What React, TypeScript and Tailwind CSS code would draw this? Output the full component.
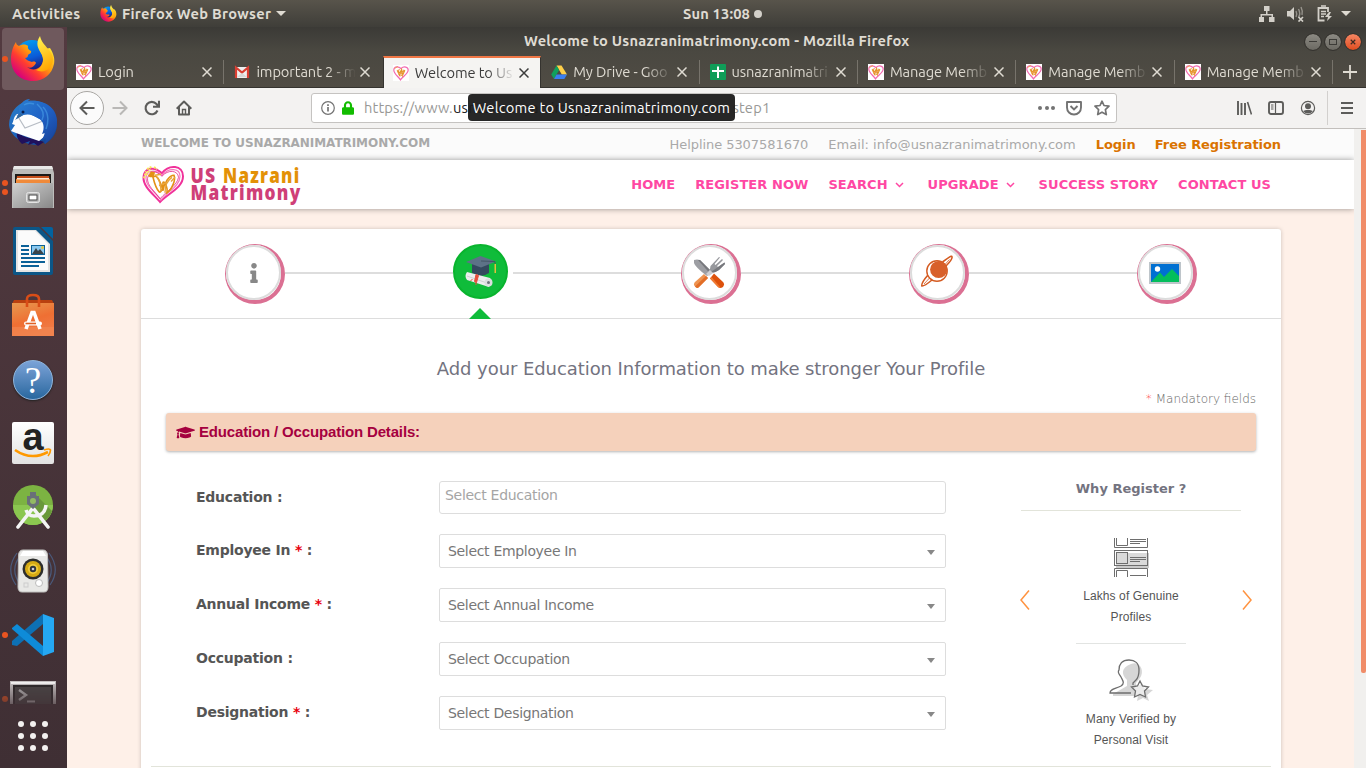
import React from "react";
import type { ReactNode } from "react";
import { FaGraduationCap, FaInfo, FaLock } from "react-icons/fa";

const uiFont = "font-['Ubuntu','Noto_Sans',sans-serif]";
const siteFont = "font-['DejaVu_Sans',sans-serif]";

/* ---------- brand marks ---------- */

function HeartMark({ className }: { className: string }) {
  return (
    <svg viewBox="0 0 42 38" className={className} fill="none" preserveAspectRatio="none">
      <path d="M18 36C11 28 1 21 1.500 12C2 4 11 0 20 8C27-1 41 0 41 11C41 22 27 27 18 36Z" stroke="#f0319a" strokeWidth="2" />
      <path d="M19 34C12 25 4 21 4 13C4 6 12 3 20 10C27 2 38 3 38 11C38 21 25 26 19 34Z" stroke="#f778bd" strokeWidth="1.200" />
      <path d="M18 33C13 26 5 20 5.500 13C7 6 13 4 20 11C26 4 36 5 36.500 12C35 20 26 24 18 33Z" stroke="#e52d8c" strokeWidth=".8" />
      <path d="M11 12C14 9 17 12 21 25C22 18 27 10 32 10C34 14 30 24 25 27C26 23 23 15 21 17C21 22 19 28 17 26C14 23 12 16 11 12Z" stroke="#e39115" strokeWidth="1.600" />
      <path d="M14 11C17 14 19 19 19 26M30 12C25 15 23 21 23 27M13 10L19 9M29 16L33 12M17 20L25 17" stroke="#e9a53a" strokeWidth="1.400" />
      <path d="M6 11L9 6L13 7L12 12L8 12Z" fill="#e39115" />
      <path d="M2 13L4 6M5 4L10 1.500M12 2L15 4M4 10L8 4" stroke="#f9e65a" strokeWidth="2" strokeDasharray="2 1" />
    </svg>
  );
}

function FavHeart() {
  return (
    <span className="flex size-4 shrink-0 items-center justify-center bg-white">
      <svg viewBox="0 0 16 16" className="size-4" fill="none">
        <path d="M7.500 14.800C5 11 .8 9 .8 5C1 1.500 5 .8 8 3.500C11 .8 15.200 2 15.200 5C15 9 10 11 7.500 14.800Z" stroke="#f368b0" strokeWidth="1.200" />
        <path d="M4.500 5L6.500 9.500L8.500 5.500L9.500 9.500L11.500 5" stroke="#e3952b" strokeWidth="1.900" />
        <path d="M5 9L11 7M4 6L7 4.500M1.500 3.500L5 1.500M7 11L10 10" stroke="#f0a254" strokeWidth="1" />
      </svg>
    </span>
  );
}

function FirefoxIcon({ className }: { className: string }) {
  return (
    <svg viewBox="0 0 46 46" className={className}>
      <defs>
        <linearGradient id="ffBody" x1="0.850" y1="0.150" x2="0.150" y2="0.850">
          <stop offset="0" stopColor="#ffe02e" />
          <stop offset=".38" stopColor="#ff9a0d" />
          <stop offset=".65" stopColor="#ff3d30" />
          <stop offset="1" stopColor="#d6007c" />
        </linearGradient>
        <linearGradient id="ffGlobe" x1="0" y1="0" x2="0.300" y2="1">
          <stop offset="0" stopColor="#00a8f5" />
          <stop offset=".6" stopColor="#0a5bd8" />
          <stop offset="1" stopColor="#22136b" />
        </linearGradient>
        <linearGradient id="ffTail" x1="0.300" y1="0" x2="0.600" y2="1">
          <stop offset="0" stopColor="#fff14f" />
          <stop offset="1" stopColor="#ffa400" />
        </linearGradient>
      </defs>
      <circle cx="22" cy="21" r="17" fill="url(#ffGlobe)" />
      <path d="M6 6C6 8 7 9 9 10C12 8 16 8 18 10C18 11 17 13 21 15C22 17 19 18 18 19C18 21 17 22 15 22C16 24 19 25 22 26C24 25 26 26 26 27C24 31 20 33 17 31C23 36 32 33 33 24C33 19 30 15 29 10C33 12 37 13 40 12C44 18 45 24 44 28C42 38 34 45 23 45C10 45 1 36 1 23C1 17 3 10 6 6Z" fill="url(#ffBody)" />
      <path d="M30 0C25 8 28 12 32 19C35 25 32 32 26 34C34 38 42 33 43 24C44 15 32 10 30 0Z" fill="url(#ffTail)" />
    </svg>
  );
}

/* ---------- dock ---------- */

function DockItem({ children, dots = 0, active = false }: { children: ReactNode; dots?: number; active?: boolean }) {
  return (
    <div className="relative flex h-16 w-[67px] shrink-0 items-center justify-center pr-px">
      {active && <span className="absolute top-px left-[2px] h-[62px] w-[62px] rounded-[4px] bg-[#6f595d]" />}
      {dots > 0 && (
        <span className="absolute inset-y-0 left-[2px] flex flex-col justify-center gap-[3px]">
          {Array.from({ length: dots }).map((_, i) => (
            <span key={i} className="size-[6px] rounded-full bg-[#e95420]" />
          ))}
        </span>
      )}
      <span className="relative flex">{children}</span>
    </div>
  );
}

function Dock() {
  return (
    <aside className="flex h-[741px] w-[67px] shrink-0 flex-col overflow-hidden bg-linear-to-b from-[#533a40] to-[#3f2f34]">
      <div className="flex h-[677px] flex-col overflow-hidden">
        <DockItem active dots={1}><FirefoxIcon className="size-[46px]" /></DockItem>

        <DockItem>
          <svg viewBox="0 0 50 50" className="size-[50px]">
            <defs>
              <linearGradient id="tb" x1="0" y1="0" x2="1" y2="1"><stop offset="0" stopColor="#2b7fc9" /><stop offset=".5" stopColor="#1c63bd" /><stop offset="1" stopColor="#0e3b86" /></linearGradient>
              <linearGradient id="tbWing" x1="0" y1="0" x2="1" y2="1"><stop offset="0" stopColor="#2a7fd0" /><stop offset=".5" stopColor="#2062c6" /><stop offset="1" stopColor="#173f95" /></linearGradient>
            </defs>
            <path d="M20 3C34 1 48 9 49 24C50 34 44 42 37 46L34 43L28 47C14 46 2 38 1 27C1 15 9 6 17 4Z" fill="url(#tb)" />
            <path d="M9 34C14 39 22 40 30 42L36 44L30 48L26 45L20 47L22 43L14 46C10 42 8 38 9 34Z" fill="#20115c" />
            <path d="M9 16C5 19 6 23 4 26L7 27L3 33L8 35L31 43L37 38L36 31L39 25L20 15Z" fill="#fdfdfe" />
            <path d="M9 17L17 30L35 23" fill="none" stroke="#b7bcc4" strokeWidth="1.200" />
            <path d="M11 14C10 7 16 1 22 1L20 3C34 1 48 8 49 22C49 34 44 40 37 46L38 40L34 42L37 35L34 36C37 30 36 23 30 20C24 16 17 15 12 19L8 21Z" fill="url(#tbWing)" />
            <path d="M12 15L7 22L15 17Z" fill="#34679a" /><circle cx="15" cy="14" r="1.500" fill="#0a1d4a" />
            <path d="M29 6C36 12 36 18 34 22M35 9C42 16 40 26 38 31M16 7Q20 4 26 6" stroke="#4aa0e8" fill="none" strokeWidth="1.500" opacity=".6" />
          </svg>
        </DockItem>

        <DockItem dots={2}>
          <svg viewBox="0 0 42 44" className="h-[44px] w-[42px]">
            <defs>
              <linearGradient id="cab" x1="0" y1="0" x2="1" y2="1"><stop offset="0" stopColor="#d0d0d0" /><stop offset="1" stopColor="#888" /></linearGradient>
            </defs>
            <path d="M2 1H40L42 8V43H0V8Z" fill="#bdbdbb" />
            <path d="M2 1H40L41 4H1Z" fill="#e9e9e8" />
            <path d="M3 9H39V18H3Z" fill="#1d1b19" />
            <path d="M5 11H37L38 18H4Z" fill="#c7501c" /><path d="M4 14H38V18H4Z" fill="#f08a3a" /><path d="M5 13H37V14.500H5Z" fill="#ffe8d0" />
            <path d="M1 18H41V42Q41 43 40 43H2Q1 43 1 42Z" fill="url(#cab)" />
            <rect x="14.500" y="27.500" width="13" height="10" rx="2" fill="#bdbdbd" stroke="#e4e4e4" />
            <rect x="17" y="30" width="8" height="5" fill="#fff" stroke="#444" />
          </svg>
        </DockItem>

        <DockItem>
          <svg viewBox="0 0 40 48" className="h-[48px] w-[40px]">
            <path d="M2 0H26L40 14V46Q40 48 38 48H2Q0 48 0 46V2Q0 0 2 0Z" fill="#0b5687" />
            <path d="M28 0H38Q40 0 40 2V12Z" fill="#0263a0" />
            <path d="M3 3H23L37 17V45H3Z" fill="#e4e4e4" /><path d="M5 4H22L35 17V43H5Z" fill="#fbfbfb" />
            <path d="M8 19H16M8 23H16M8 27H16M8 31H32M8 35H32M8 39H26" stroke="#0b6198" strokeWidth="2" />
            <rect x="18.500" y="18.500" width="13" height="9" fill="#8ac8ef" stroke="#0b6198" />
            <path d="M19 27L23 21L25 24L27 22L31 27Z" fill="#39444a" /><circle cx="29.500" cy="20.500" r="1.500" fill="#e8c840" />
          </svg>
        </DockItem>

        <DockItem>
          <svg viewBox="0 0 42 44" className="h-[44px] w-[42px]">
            <defs><linearGradient id="bag" x1="0" y1="0" x2=".4" y2="1"><stop offset="0" stopColor="#e7994f" /><stop offset=".6" stopColor="#ef6f33" /><stop offset="1" stopColor="#f07a45" /></linearGradient></defs>
            <path d="M2 7H40L42 11H0Z" fill="#b9400f" />
            <path d="M0 10H42V43H0Z" fill="url(#bag)" />
            <path d="M15 14V6Q15 2 21 2Q27 2 27 6V14" fill="none" stroke="#d94d17" strokeWidth="2.600" />
            <path d="M0 34H42V43H0Z" fill="#f38a55" opacity=".55" />
            <path d="M14 36L20 19.500H22L28 36" fill="none" stroke="#fff" strokeWidth="3.600" />
            <rect x="12" y="28.500" width="18" height="4" rx="2" fill="#fff" /><path d="M13.500 30.500H24" stroke="#e06024" strokeWidth="1.600" />
          </svg>
        </DockItem>

        <DockItem>
          <span className="mt-0.5 flex size-10 items-center justify-center rounded-full border border-[#8fb6de] bg-linear-to-b from-[#7ba3d8] to-[#28689f] shadow-[0_1px_2px_#222] font-['Liberation_Serif',serif] text-[37px] leading-none text-white">?</span>
        </DockItem>

        <DockItem>
          <span className="relative flex size-[42px] justify-center rounded-[2px] bg-linear-to-b from-white to-[#e2e2e2] font-['Liberation_Sans',sans-serif] text-[38px] leading-[31px] font-bold text-[#222]">
            a
            <svg viewBox="0 0 42 42" className="absolute inset-0 size-[42px]" fill="none">
              <path d="M3 28Q19 39 36 30" stroke="#f90" strokeWidth="2.600" /><path d="M32 28Q38 26 38.500 28Q38.500 31 36 34" stroke="#f90" strokeWidth="1.700" />
            </svg>
          </span>
        </DockItem>

        <DockItem>
          <svg viewBox="0 0 40 46" className="h-[46px] w-[40px]">
            <circle cx="20" cy="21" r="20" fill="#7cb342" /><path d="M0 21A20 20 0 0 0 40 21Z" fill="#8bc750" />
            <path d="M22 10L39 27A20 20 0 0 1 32 37L18 25Z" fill="#69983a" />
            <path d="M20 24L35 43M20 24L5 43" stroke="#f4f4f4" strokeWidth="3.600" strokeLinecap="round" />
            <path d="M13 26Q15 32 21 32Q32 32 33 21" stroke="#f4f4f4" strokeWidth="3.500" fill="none" />
            <path d="M17 8H23V12H26V20L20 25L14 20V12H17Z" fill="#697078" /><circle cx="20" cy="17" r="3" fill="#93ba63" />
          </svg>
        </DockItem>

        <DockItem>
          <svg viewBox="0 0 48 44" className="h-[44px] w-[48px]">
            <path d="M8 4Q-4 20 7 36M12 6Q0 20 11 35M40 4Q52 20 41 36M36 6Q48 20 37 35" fill="none" stroke="#4c6791" strokeWidth="1.200" opacity=".75" />
            <path d="M14 1H34Q38 1 38.500 6L39 38Q39 43 35 43H13Q9 43 9 38L9.500 6Q10 1 14 1Z" fill="#e8e8e6" stroke="#c2c2c0" />
            <path d="M14 2H34L37 7H11Z" fill="#fff" />
            <circle cx="24" cy="20" r="10.500" fill="#2d2e2d" /><circle cx="24" cy="20" r="8" fill="#d6aa14" /><circle cx="24" cy="20" r="5" fill="#f1cd3c" />
            <circle cx="24" cy="20" r="3.200" fill="#30343a" /><circle cx="24" cy="20" r="1.300" fill="#ccd" />
            <circle cx="30" cy="34" r="3.500" fill="#fff" stroke="#bbb" /><rect x="15" y="34" width="4" height="4" fill="none" stroke="#ccc" />
          </svg>
        </DockItem>

        <DockItem dots={1}>
          <svg viewBox="0 0 42 42" className="size-[42px]">
            <path d="M0 27V31L5 32L31 10V0Z" fill="#0d70b4" />
            <path d="M0 14L5 10L31 32V42L0 15Z" fill="#0e8bd8" />
            <path d="M31 0L42 4V38L31 42Z" fill="#25a8f3" />
          </svg>
        </DockItem>

        <div className="mask-b-from-20% mask-b-to-75%">
          <DockItem dots={1}>
            <svg viewBox="0 0 46 36" className="h-[36px] w-[46px]">
              <rect width="46" height="36" fill="#c9c5c5" /><rect x="1" y="1" width="44" height="2" fill="#fff" />
              <rect x="3" y="4" width="40" height="31" fill="#2b2829" /><rect x="5" y="6" width="36" height="28" fill="#4a4647" />
              <path d="M9 9L16 14L9 19" stroke="#bbb" strokeWidth="2.400" fill="none" /><path d="M17 20.500H25" stroke="#bbb" strokeWidth="2" />
            </svg>
          </DockItem>
        </div>
      </div>
      <div className="mt-[17px] ml-[18px] grid w-[30px] grid-cols-3 gap-[6px]">
        {Array.from({ length: 9 }).map((_, i) => (
          <span key={i} className="size-[6px] rounded-full bg-[#f3f1f0]" />
        ))}
      </div>
    </aside>
  );
}

/* ---------- desktop top bar ---------- */

function TopBar() {
  return (
    <header className={`${uiFont} grid h-[27px] shrink-0 grid-cols-[624px_1fr_auto] items-center bg-linear-to-b from-[#58544b] to-[#3f3e39] text-[14.67px] font-bold text-[#dfdbd2]`}>
      <div className="flex items-center pl-3">
        <span className="w-[88px] tracking-[0.33px]">Activities</span>
        <FirefoxIcon className="size-[17px]" />
        <span className="ml-[5px] tracking-[0.28px]">Firefox Web Browser</span>
        <span className="ml-[5px] h-0 w-0 border-x-5 border-t-5 border-x-transparent border-t-[#dfdbd2]" />
      </div>
      <div className="flex items-center pl-[59px]">
        <span className="tracking-[0.15px]">Sun 13:08</span>
        <span className="ml-1 size-2 rounded-full bg-[#d3d0c9]" />
      </div>
      <div className="flex items-center pr-[15px] text-[#d3d0c9]">
        <svg viewBox="0 0 16 16" className="size-4" fill="currentColor"><path d="M5 0H10.500V5H8.500V8H14V11H15.500V16H10V11H12.500V9.500H3V11H5V16H0V11H1.500V8H7V5H5Z" /></svg>
        <svg viewBox="0 0 17 16" className="ml-3 h-4 w-[17px]" fill="currentColor"><path d="M0 5H3L7 1V14L3 10.500H0Z" /><path d="M9 5Q10.500 8 9 11M11.500 3Q14 8 11.500 11M14 1Q16 5 15 9" fill="none" stroke="currentColor" opacity=".55" strokeWidth="1.400" /><path d="M11.500 11L16 15.500M16 11L11.500 15.500" stroke="currentColor" strokeWidth="1.700" /></svg>
        <svg viewBox="0 0 16 17" className="ml-[13px] h-[17px] w-4" fill="none" stroke="currentColor"><path d="M7.500 15.500H1.500V3H11V7" strokeWidth="1.800" /><path d="M4 1H9M4 6.500H9M4 9H9M4 11.500H7" strokeWidth="1.500" /><path d="M12 7L8 12H11L10 16L15 11H12L14 7Z" fill="currentColor" stroke="none" /></svg>
        <span className="ml-2 h-0 w-0 border-x-5 border-t-5 border-x-transparent border-t-[#dfdbd2]" />
      </div>
    </header>
  );
}

/* ---------- browser chrome ---------- */

function GmailIcon() {
  return (
    <svg viewBox="0 0 16 16" className="size-4 shrink-0"><path d="M1 3H15V14H1Z" fill="#eee" /><path d="M2 14V3.500L8 8.500L14 3.500V14" fill="none" stroke="#d93f33" strokeWidth="2.200" /><path d="M3 13L8 9L13 13Z" fill="#d8d8d8" /></svg>
  );
}
function DriveIcon() {
  return (
    <svg viewBox="0 0 16 16" className="size-4 shrink-0"><path d="M5.500 1.500H10.500L16 10.500H10.800Z" fill="#ffcf48" /><path d="M5.500 1.500L8.200 6L3 15L.2 10.500Z" fill="#11a05e" /><path d="M5.500 10.500H16L13.300 15H3Z" fill="#3c7ff0" /></svg>
  );
}
function SheetsIcon() {
  return (
    <svg viewBox="0 0 16 16" className="size-4 shrink-0"><rect width="16" height="16" rx="1" fill="#0f9d58" /><path d="M2 7H14M8 2.500V14" stroke="#fff" strokeWidth="2" /></svg>
  );
}

const tabs: { title: string; icon: ReactNode; active?: boolean; sep?: boolean }[] = [
  { title: "Login", icon: <FavHeart />, sep: true },
  { title: "important 2 - m", icon: <GmailIcon /> },
  { title: "Welcome to Us", icon: <FavHeart />, active: true },
  { title: "My Drive - Goo", icon: <DriveIcon />, sep: true },
  { title: "usnazranimatri", icon: <SheetsIcon />, sep: true },
  { title: "Manage Memb", icon: <FavHeart />, sep: true },
  { title: "Manage Memb", icon: <FavHeart />, sep: true },
  { title: "Manage Memb", icon: <FavHeart />, sep: true },
];

function Chrome() {
  return (
    <div className={`${uiFont} relative shrink-0`}>
      <div className="bg-linear-to-b from-[#3b3a36] via-[#4a4841] via-40% to-[#504c44]">
        <div className="relative flex h-[29px] items-center justify-end gap-1 pr-[5px] text-[14.67px] text-[#dfdbd2]">
          <span className="absolute top-[3px] left-[457px] whitespace-nowrap font-bold tracking-[0.26px]">Welcome to Usnazranimatrimony.com - Mozilla Firefox</span>
          <span className="flex size-4 items-center justify-center rounded-full bg-linear-to-b from-[#8c8a83] to-[#6c6a63] outline outline-[#35332f]"><span className="h-px w-2 bg-[#3c3b37]" /></span>
          <span className="flex size-4 items-center justify-center rounded-full bg-linear-to-b from-[#8c8a83] to-[#6c6a63] outline outline-[#35332f]"><span className="h-[6px] w-2 border border-[#3c3b37]" /></span>
          <span className="flex size-4 items-center justify-center rounded-full bg-linear-to-b from-[#f58662] to-[#e04c1c] outline outline-[#35332f]"><svg viewBox="0 0 8 8" className="size-[6px]"><path d="M1 1L7 7M7 1L1 7" stroke="#3c2a22" strokeWidth="1.600" /></svg></span>
        </div>
        <div className="flex h-8 border-b border-[#35332f]">
          {tabs.map((t, i) => (
            <div
              key={i}
              className={
                t.active
                  ? "relative -mb-px flex w-[158.4px] items-center border-x border-t-2 border-x-[#35332f] border-t-[#f07746] bg-[#f5f4f2] pl-[9px] text-[#3c3c3c]"
                  : `relative flex items-center text-[#dfdbd2] ${i === 0 ? "w-[157.4px] pl-[9px]" : "w-[158.4px] pl-[10px]"}`
              }
            >
              {t.icon}
              <span className="ml-[6px] w-[100px] mask-r-from-72% mask-r-to-100% text-[14.67px] leading-5 tracking-[-0.1px] whitespace-nowrap">{t.title}</span>
              <svg viewBox="0 0 10 10" className="ml-[4px] size-[10px] shrink-0" fill="none" stroke="currentColor" strokeWidth="1.500"><path d="M.5 .5L9.500 9.500M9.500 .5L.5 9.500" /></svg>
              {t.sep && <span className="absolute top-[4px] right-0 h-6 w-px bg-[#77736b]" />}
            </div>
          ))}
          <div className="flex flex-1 items-center justify-center text-[#dfdbd2]">
            <svg viewBox="0 0 14 14" className="size-[14px]" stroke="currentColor" strokeWidth="1.800"><path d="M7 0V14M0 7H14" /></svg>
          </div>
        </div>
      </div>

      <div className="flex h-[41px] items-center border-b border-[#c2bfbc] bg-[#f3f2f1] text-[#5c5c5a]">
        <span className="ml-[3px] flex size-[34px] items-center justify-center rounded-full border border-[#a9a7a4] bg-[#fbfbfb]">
          <svg viewBox="0 0 16 16" className="size-4" fill="none" stroke="currentColor" strokeWidth="2"><path d="M15.500 8H1.500M8 1.500L1.500 8L8 14.500" /></svg>
        </span>
        <svg viewBox="0 0 16 16" className="ml-2 size-4 text-[#b9b8b6]" fill="none" stroke="currentColor" strokeWidth="2"><path d="M.5 8H14.500M8 1.500L14.500 8L8 14.500" /></svg>
        <svg viewBox="0 0 16 16" className="ml-4 size-4" fill="none" stroke="currentColor" strokeWidth="2.100"><path d="M13.500 10.500A6.200 6.200 0 1 1 12.500 4L14 6" /><path d="M15 .8V6.800H9" /></svg>
        <svg viewBox="0 0 16 16" className="ml-4 size-4" fill="none" stroke="currentColor" strokeWidth="2"><path d="M.7 8.700L8 1.500L15.300 8.700M3 7V14.500H13V7" strokeLinejoin="round" /><path d="M6.500 15V9.500H9.500V15" strokeWidth="1.400" /></svg>
        <div className="ml-[119px] flex h-[30px] w-[806px] items-center rounded-[3px] border border-[#c5c3c1] bg-white pl-[9px] text-[14.67px]">
          <svg viewBox="0 0 14 14" className="size-[14px] text-[#737373]" fill="none" stroke="currentColor"><circle cx="7" cy="7" r="6.300" strokeWidth="1.200" /><path d="M7 6V10.500M7 3.300V5" strokeWidth="1.700" /></svg>
          <FaLock className="ml-[7px] h-[14px] w-[12px] text-[#12bc00]" />
          <span className="ml-[10px] tracking-[0.15px] text-[#989896]">https://www.</span>
          <span className="w-[279.5px] tracking-[0.3px] text-[#222]">usnazranimatrimony.com</span>
          <span className="tracking-[0.2px] text-[#989896]">step1</span>
          <span className="ml-auto flex gap-[2.500px] pr-[7px]"><i className="size-1 rounded-full bg-[#737373]" /><i className="size-1 rounded-full bg-[#737373]" /><i className="size-1 rounded-full bg-[#737373]" /></span>
          <svg viewBox="0 0 16 16" className="mr-3 ml-1 size-4 text-[#737373]" fill="none" stroke="currentColor" strokeWidth="1.900"><path d="M1 2H15V7.500C15 11.500 12 14.500 8 14.500S1 11.500 1 7.500Z" strokeLinejoin="round" /><path d="M4.500 6L8 9.500L11.500 6" /></svg>
          <svg viewBox="0 0 16 16" className="mr-[6px] size-4 text-[#737373]" fill="none" stroke="currentColor" strokeWidth="1.700"><path d="M8 1.200L10 5.500L15 6.200L11.400 9.600L12.300 14.600L8 12.200L3.700 14.600L4.600 9.600L1 6.200L6 5.500Z" strokeLinejoin="round" /></svg>
        </div>
        <svg viewBox="0 0 16 16" className="ml-[119px] size-4" stroke="currentColor" strokeWidth="2"><path d="M2 1V15M5.500 3V15M9 3V15" strokeWidth="1.900" /><path d="M11.500 2L15.500 14.500" strokeWidth="1.600" /></svg>
        <svg viewBox="0 0 16 16" className="ml-4 size-4" fill="none" stroke="currentColor"><rect x="1" y="2" width="14" height="12" rx="2" strokeWidth="1.900" /><path d="M7.500 2V14M3 5H5.500M3 7H5.500M3 9H5.500" strokeWidth="1.200" /></svg>
        <svg viewBox="0 0 16 16" className="ml-4 size-4" fill="none" stroke="currentColor"><circle cx="8" cy="8" r="6.600" strokeWidth="1.200" /><circle cx="8" cy="6.200" r="3" fill="currentColor" stroke="none" /><path d="M3 11C5 9.500 11 9.500 13 11Q11 13.500 8 13.500T3 11Z" fill="currentColor" stroke="none" /></svg>
        <span className="ml-[11px] h-[34px] w-px bg-[#d2d0ce]" />
        <svg viewBox="0 0 12 12" className="ml-[13px] h-3 w-3" stroke="currentColor" strokeWidth="2"><path d="M0 1H12M0 6H12M0 11H12" /></svg>
      </div>

      <div className="absolute top-[67px] left-[401px] flex h-[27px] w-[267px] items-center justify-center rounded-[4px] bg-[#1b1b1b]/95 text-[14.67px] tracking-[0.25px] whitespace-nowrap text-white">
        Welcome to Usnazranimatrimony.com
      </div>
    </div>
  );
}

/* ---------- page ---------- */

function Chevron() {
  return (
    <svg viewBox="0 0 9 6" className="ml-[7px] h-[6px] w-[9px]" fill="none" stroke="currentColor" strokeWidth="1.500"><path d="M1 1L4.500 4.500L8 1" /></svg>
  );
}

function SiteHeader() {
  return (
    <>
      <div className="flex h-[31px] justify-between bg-[#fbfbfb] pr-[73px] pl-[74px] text-[13px] whitespace-nowrap text-[#a9a9a9]">
        <span className="pt-[4px] text-[12px] leading-5 font-bold tracking-[-0.06px]">WELCOME TO USNAZRANIMATRIMONY.COM</span>
        <div className="flex gap-5 pt-[6px] leading-5">
          <span className="tracking-[-0.06px]">Helpline 5307581670</span>
          <span className="w-[247.5px] tracking-[0.03px]">Email: info@usnazranimatrimony.com</span>
          <span className="w-[39px] font-bold tracking-[-0.1px] text-[#da7300]">Login</span>
          <span className="font-bold tracking-[-0.06px] text-[#da7300]">Free Registration</span>
        </div>
      </div>
      <div className="relative flex h-[49px] items-center justify-between bg-white pr-[83px] pl-[75px] shadow-[0_0_6px_rgba(0,0,0,0.4)]">
        <div className="flex items-center">
          <HeartMark className="h-[39px] w-[42px]" />
          <svg viewBox="0 0 112 44" className="ml-[6px] h-[44px] w-[112px]" fontFamily="'Open Sans','Noto Sans',sans-serif" fontWeight="800" fontSize="20.500" letterSpacing="1.500">
            <text x="0.500" y="20" textLength="26" lengthAdjust="spacingAndGlyphs" fill="#cf3f78">US</text>
            <text x="33" y="20" textLength="77.500" lengthAdjust="spacingAndGlyphs" fill="#e39107">Nazrani</text>
            <text x="0.500" y="37" textLength="111" lengthAdjust="spacingAndGlyphs" fill="#cf3f78">Matrimony</text>
          </svg>
        </div>
        <nav className="flex gap-5 text-[13px] font-bold tracking-[0.07px] text-[#ff47a3]">
          <span>HOME</span>
          <span>REGISTER NOW</span>
          <span className="mr-1 flex items-center">SEARCH<Chevron /></span>
          <span className="mr-1 flex items-center">UPGRADE<Chevron /></span>
          <span>SUCCESS STORY</span>
          <span>CONTACT US</span>
        </nav>
      </div>
    </>
  );
}

function StepCircle({ children }: { children: ReactNode }) {
  return (
    <div className="size-[60px] rounded-full border-t border-r-4 border-b-4 border-l border-[#db7093] bg-white">
      <div className="flex size-[55px] items-center justify-center rounded-full border-2 border-[#dcdcdc] bg-white">{children}</div>
    </div>
  );
}

const DetailIcons = {
  cap: (
    <svg viewBox="0 0 32 34" className="h-[34px] w-8">
      <path d="M7 9H24V18Q15 24 7 18Z" fill="#34495e" />
      <path d="M15.500 1L31 6.500L16 12.500L1 7Z" fill="#5d7287" /><path d="M16 6L30 6.500V9" stroke="#3e4e5e" strokeWidth=".8" fill="none" /><path d="M29.500 9H31V18H29.500Z" fill="#e6bd3b" />
      <path d="M2 17L25 23Q29 27 24 32L2 25Q-1 21 2 17Z" fill="#ecedee" /><path d="M2 21L22 28" stroke="#cfd1d3" /><circle cx="23.500" cy="27.500" r="4" fill="#dcdedf" /><circle cx="23.500" cy="27.500" r="1.500" fill="#6b737b" />
      <path d="M11 19.500L9.500 26.500L11.500 27.500L13.500 20.500ZM7.500 24L5.500 26M11 27V30" fill="#e64c3c" stroke="#e64c3c" />
    </svg>
  ),
  food: (
    <svg viewBox="0 0 32 32" className="-mt-0.5 -ml-[1px] size-8">
      <path d="M1 4Q4 3 7 4L17 14L18 17L14 20Q2 11 1 7Z" fill="#9d9ea3" /><path d="M5 4L7 4L17 14L16.500 17Z" fill="#77787d" />
      <path d="M18 17L15 16Q16 14 17 13L17.500 10L26 1L27 1.500L21.500 8L22.500 9L29 3L30 4L24 10L25 11L31.500 6.500L32 8L26 14Q22 17 18 17Z" fill="#97989d" />
      <path d="M18 16L25 11L31.500 6.500L32 8L26 14Q22 17 18 17Z" fill="#77787d" />
      <path d="M11 18L15 22L6 31Q4 33 2 30.500Q0 28 2 26Z" fill="#ee9350" /><path d="M13 20L15 22L6 31Q4 33 2 30.500Z" fill="#e26e28" />
      <path d="M13 18L17 14L20 17L16 20Z" fill="#cfcfd2" />
      <path d="M21 17.500L30 26Q32 28 30 31Q27 33 25 31L17 22.500Z" fill="#dd510c" /><path d="M18.500 21L27.500 31.500Q26 32 25 31L17 22.500Z" fill="#f07a31" />
    </svg>
  ),
  planet: (
    <svg viewBox="0 0 32 32" className="-mt-[3px] -ml-[1px] size-8" fill="none">
      <circle cx="16" cy="16" r="10.200" stroke="#d45b21" strokeWidth="1.400" fill="#fff" />
      <circle cx="17.700" cy="14.500" r="8.600" fill="#d8602a" />
      <path d="M21.500 7Q30.500 0 31 1.500Q32 4 25 11M7 20Q0 28 .9 31Q3 31.500 11 25" stroke="#d45b21" strokeWidth="1.600" />
      <path d="M24 9.500L28.500 4.500M3 29L8.500 23" stroke="#d45b21" strokeWidth=".8" />
    </svg>
  ),
  photo: (
    <svg viewBox="0 0 32 22" className="-ml-px h-[22px] w-8"><rect width="32" height="22" fill="#bec5ca" /><rect x="2" y="2" width="28" height="18" fill="#0070d2" /><path d="M2 20L11 10.500L15 15L23 7L30 14V20Z" fill="#04be5c" /><circle cx="8.500" cy="7" r="2.700" fill="#fff" /></svg>
  ),
};

function Steps() {
  return (
    <div className="flex h-[90px] items-start border-b border-[#ddd] px-[84px] pt-[15px]">
      <StepCircle><FaInfo className="h-[20px] w-[10px] text-[#888]" /></StepCircle>
      <span className="mt-[28px] h-[2px] flex-1 bg-[#ddd]" />
      <div className="relative w-[60px]">
        <div className="flex size-[55px] items-center justify-center rounded-full border-2 border-[#09b42e] bg-[#0fbc3a]">{DetailIcons.cap}</div>
        <span className="absolute top-[64px] left-[16px] h-0 w-0 border-x-11 border-b-11 border-x-transparent border-b-[#0fbc3a]" />
      </div>
      <span className="mt-[28px] h-[2px] flex-1 bg-[#ddd]" />
      <StepCircle>{DetailIcons.food}</StepCircle>
      <span className="mt-[28px] h-[2px] flex-1 bg-[#ddd]" />
      <StepCircle>{DetailIcons.planet}</StepCircle>
      <span className="mt-[28px] h-[2px] flex-1 bg-[#ddd]" />
      <StepCircle>{DetailIcons.photo}</StepCircle>
    </div>
  );
}

const rows = [
  { label: "Employee In", required: true, value: "Select Employee In" },
  { label: "Annual Income", required: true, value: "Select Annual Income" },
  { label: "Occupation", required: false, value: "Select Occupation" },
  { label: "Designation", required: true, value: "Select Designation" },
];

function Form() {
  return (
    <div className="w-[780px] pt-[30px] pl-[30px] text-[14px]">
      <div className="flex h-[33px] items-center">
        <span className="w-[243px] font-bold tracking-[-0.23px] text-[#555]">Education :</span>
        <span className="flex h-[33px] w-[507px] rounded-[3px] border border-[#ddd] pt-[3px] pl-[5px] leading-5 tracking-[-0.29px] text-[#a5a5a5]">Select Education</span>
      </div>
      {rows.map((r) => (
        <div key={r.label} className="mt-5 flex h-[34px] items-center">
          <span className="w-[243px] pb-[2px] font-bold tracking-[-0.23px] text-[#555]">
            {r.label} {r.required && <span className="text-[#e8000d]">* </span>}:
          </span>
          <span className="flex h-[34px] w-[507px] items-center justify-between rounded-[2px] border border-[#ddd] pr-[10px] pl-2 tracking-[-0.32px] text-[#777]">
            {r.value}
            <span className="mt-[3px] h-0 w-0 border-x-4 border-t-5 border-x-transparent border-t-[#888]" />
          </span>
        </div>
      ))}
    </div>
  );
}

function WhyRegister() {
  return (
    <div className="ml-auto flex w-[250px] flex-col items-center pt-[28px]">
      <h3 className="text-[13px] leading-5 font-bold text-[#73737f]">Why Register ?</h3>
      <span className="mt-[11px] h-px w-[220px] bg-[#e2e4da]" />
      <div className="flex self-stretch pl-[14px]">
        <svg viewBox="0 0 10 20" className="mt-[79px] h-5 w-[10px]" fill="none" stroke="#ff9340" strokeWidth="1.500"><path d="M9 .5L1 10L9 19.500" /></svg>
        <div className="ml-[46px] flex w-[110px] flex-col items-center text-center font-['Liberation_Sans',sans-serif] text-[12px] leading-[21px] tracking-[0.1px] text-[#555]">
          <svg viewBox="0 0 37 40" className="mt-[27px] h-10 w-[37px]" fill="none" stroke="#6e6e6e">
            <path d="M3 15H36V30H3Z" fill="#cbcbcb" stroke="none" />
            <path d="M1.500 0V9.500H34.500V0M3.500 0V7.500H14.500V0" /><path d="M17 1.500H33M17 3.500H33M17 5.500H27" />
            <rect x="1.500" y="12.500" width="33" height="15" fill="#fff" fillOpacity=".3" /><rect x="3.500" y="14.500" width="11" height="11" />
            <path d="M17 19.500H33M17 21.500H33M17 23.500H27" />
            <path d="M1.500 39V30.500H34.500V39M3.500 39V32.500H14.500V39M17 37.500H33" />
          </svg>
          <p className="mt-[8px]">Lakhs of Genuine<br />Profiles</p>
          <span className="mt-[15px] h-px w-full bg-[#e2e4e2]" />
          <svg viewBox="0 0 44 42" className="mt-[15px] h-[42px] w-11" fill="none" stroke="#6e6e6e">
            <path d="M22 5C31 1 36 12 31 19L27 24L29 37H4V35L18 27V21C12 15 12 9 22 5Z" fill="#d6d6d6" stroke="none" />
            <path d="M33 24L36 30L44 31L38 36L40 42L34 39L28 42L29 37L25 31Z" fill="#d6d6d6" stroke="none" />
            <path d="M27 21C30 18 30 15 30 11C30 4 26 1 20 1C13 1 10 5 10 11C8 13 10 15 12 18C14 22 16 24 12 27C6 30 1 30 1 34H22M27 21L24 24V26" strokeWidth="1.300" />
            <path d="M31 22L33.500 27L39.500 28L35.500 32L36.500 38L31 35.500L25.500 38L26.500 32L22.500 28L28.500 27Z" fill="#fff" fillOpacity=".5" strokeWidth="1.300" />
          </svg>
          <p className="mt-[8px]">Many Verified by<br />Personal Visit</p>
        </div>
        <svg viewBox="0 0 10 20" className="mt-[79px] ml-[56px] h-5 w-[10px] shrink-0" fill="none" stroke="#ff9340" strokeWidth="1.500"><path d="M1 .5L9 10L1 19.500" /></svg>
      </div>
    </div>
  );
}

function Page() {
  return (
    <div className={`${siteFont} flex min-h-0 flex-1`}>
      <main className="w-[1287px] overflow-hidden bg-[#fef0e8]">
        <SiteHeader />
        <section className="mt-5 ml-[74px] h-[600px] w-[1140px] rounded-[3px] bg-white shadow-[0_0_4px_rgba(0,0,0,0.2)]">
          <Steps />
          <h2 className="pt-[36px] text-center text-[18px] leading-7 tracking-[-0.07px] text-[#73737f]">Add your Education Information to make stronger Your Profile</h2>
          <p className="pt-[6px] pr-[25px] text-right text-[12px] leading-5 font-extralight text-[#666]"><span className="text-[#ff2020]">*</span> Mandatory fields</p>
          <div className="mx-[25px] mt-[4px] flex h-[38px] items-center rounded-[3px] bg-[#f5d1bb] pl-[10px] shadow-[0_1px_3px_rgba(0,0,0,0.3)] font-['Liberation_Sans',sans-serif] text-[15px] font-bold tracking-[-0.16px] text-[#a5003f]">
            <FaGraduationCap className="mr-[4px] h-[15px] w-[19px]" />
            Education / Occupation Details:
          </div>
          <div className="mx-[25px] flex h-[315px]">
            <Form />
            <WhyRegister />
          </div>
          <div className="mx-[10px] border-t border-[#e2e4da]" />
        </section>
      </main>
      <div className="flex flex-1 justify-end bg-[#f1f0ee] pt-px">
        <span className="h-[543px] w-[5px] rounded-b-[2px] bg-[#f08c68]" />
      </div>
    </div>
  );
}

export default function App() {
  return (
    <div className="flex h-[768px] w-[1366px] flex-col overflow-hidden">
      <TopBar />
      <div className="flex flex-1">
        <Dock />
        <div className="flex h-[741px] w-[1299px] flex-col">
          <Chrome />
          <Page />
        </div>
      </div>
    </div>
  );
}
